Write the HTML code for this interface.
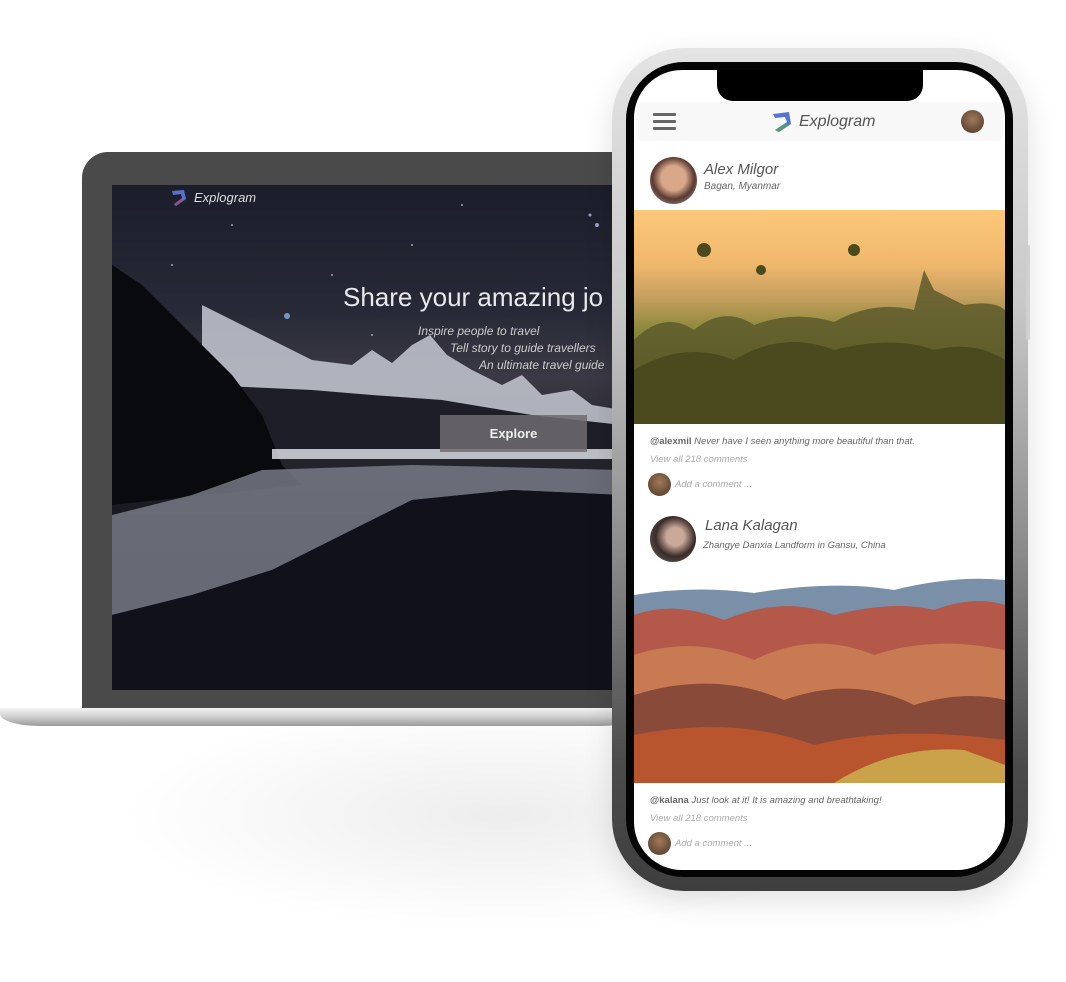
<!DOCTYPE html>
<html><head><meta charset="utf-8"><style>
*{margin:0;padding:0;box-sizing:border-box}
body{width:1066px;height:982px;background:#fff;position:relative;overflow:hidden;font-family:"Liberation Sans",sans-serif}
.abs{position:absolute}
.it{font-style:italic}
</style></head><body>
<!-- laptop shadow -->
<div class="abs" style="left:120px;top:700px;width:760px;height:230px;border-radius:50%;background:radial-gradient(ellipse at center,rgba(0,0,0,0.07),rgba(0,0,0,0) 70%)"></div>
<!-- laptop bezel -->
<div class="abs" style="left:82px;top:152px;width:560px;height:560px;background:#4a4a4a;border-radius:26px 26px 0 0"></div>
<!-- laptop screen -->
<div class="abs" style="left:112px;top:185px;width:510px;height:505px;overflow:hidden;background:linear-gradient(#1b1e2a 0%,#272a36 25%,#3a3944 38%,#23242c 55%,#14151c 70%,#0d0e15 100%)">
<svg width="510" height="505" style="position:absolute;left:0;top:0">
<g fill="#cfd8ff" opacity="0.7">
<circle cx="175" cy="131" r="3" fill="#9cc4ff"/><circle cx="485" cy="40" r="2"/><circle cx="478" cy="30" r="1.5"/><circle cx="300" cy="60" r="1"/><circle cx="220" cy="90" r="1"/><circle cx="120" cy="40" r="1"/><circle cx="390" cy="110" r="1"/><circle cx="60" cy="80" r="1"/><circle cx="350" cy="20" r="1"/><circle cx="260" cy="150" r="1"/>
</g>
<polygon points="90,120 130,140 170,160 200,175 240,180 260,165 280,178 300,160 318,150 335,170 360,185 390,200 410,190 430,210 460,205 480,220 510,225 510,240 90,240" fill="#c5c8d2" opacity="0.85"/>
<polygon points="90,200 200,205 260,210 330,215 420,230 510,240 510,268 90,268" fill="#1d1e28"/>
<polygon points="0,80 30,100 60,130 90,160 120,190 150,230 170,280 190,300 0,320" fill="#090a0e"/>
<rect x="160" y="264" width="350" height="10" fill="#d8dae0" opacity="0.85"/>
<polygon points="150,285 300,280 510,285 510,310 400,305 300,315 240,345 160,385 80,410 0,430 0,330 80,310" fill="#7d808c" opacity="0.8"/>
<polygon points="0,430 80,410 160,385 240,345 300,315 400,305 510,310 510,505 0,505" fill="#10111a"/>
</svg>
<div class="abs it" style="left:82px;top:5px;color:#ddd;font-size:13px">Explogram</div>
<svg class="abs" style="left:58px;top:3px" width="18" height="20"><path d="M2 3 L14 2 L16 11 L6 18 L4 16 L12 10 L11 6 L3 7Z" fill="#5a6fd0"/><path d="M4 16 L12 11 L13 13 L6 18Z" fill="#9a4f7c"/></svg>
<div class="abs" style="left:231px;top:97px;color:#e8e8ee;font-size:26px;white-space:nowrap">Share your amazing jo</div>
<div class="abs it" style="left:306px;top:139px;color:#ccc;font-size:12px;white-space:nowrap">Inspire people to travel</div>
<div class="abs it" style="left:338px;top:156px;color:#ccc;font-size:12px;white-space:nowrap">Tell story to guide travellers</div>
<div class="abs it" style="left:367px;top:173px;color:#ccc;font-size:12px;white-space:nowrap">An ultimate travel guide</div>
<div class="abs" style="left:328px;top:230px;width:147px;height:37px;background:rgba(110,108,112,0.85);color:#eee;font-size:13px;font-weight:bold;text-align:center;line-height:37px">Explore</div>
</div>
<!-- laptop base -->
<div class="abs" style="left:0;top:708px;width:640px;height:18px;background:linear-gradient(#f3f3f3,#cfcfcf 50%,#9a9a9a);border-radius:0 0 40px 40px/0 0 12px 12px"></div>
<!-- phone frame -->
<div class="abs" style="left:612px;top:48px;width:416px;height:843px;border-radius:72px;background:linear-gradient(#e4e4e4 0%,#c9c9c9 30%,#8a8a8a 60%,#4b4b4b 85%,#3e3e3e 100%);box-shadow:0 10px 30px rgba(0,0,0,0.12)"></div>
<div class="abs" style="left:1026px;top:245px;width:4px;height:95px;background:#d0d0d0;border-radius:2px"></div>
<div class="abs" style="left:626px;top:62px;width:387px;height:815px;border-radius:58px;background:#050505"></div>
<div class="abs" style="left:634px;top:70px;width:371px;height:800px;border-radius:48px;background:#fff;overflow:hidden">
  <div class="abs" style="left:83px;top:0;width:206px;height:31px;background:#000;border-radius:0 0 16px 16px"></div>
  <div class="abs" style="left:2px;top:32px;width:367px;height:39px;background:#f8f8f8;border-radius:6px"></div>
  <div class="abs" style="left:19px;top:43px;width:23px;height:3px;background:#666;box-shadow:0 7px 0 #666,0 14px 0 #666;border-radius:1px"></div>
  <svg class="abs" style="left:137px;top:40px" width="22" height="24"><path d="M2 4 L18 2 L20 14 L8 22 L4 20 L16 12 L14 7 L4 8Z" fill="#5576d0"/><path d="M4 20 L16 13 L17 16 L7 22Z" fill="#5aa35a" opacity=".8"/></svg>
  <div class="abs it" style="left:165px;top:43px;font-size:16px;color:#555">Explogram</div>
  <div class="abs" style="left:327px;top:40px;width:23px;height:23px;border-radius:50%;background:radial-gradient(circle at 50% 40%,#a07a5a,#4a3424)"></div>
  <!-- post 1 -->
  <div class="abs" style="left:16px;top:87px;width:47px;height:47px;border-radius:50%;background:radial-gradient(circle at 50% 45%,#d9a88a 0 35%,#5a3a32 60%,#b7a79a)"></div>
  <div class="abs it" style="left:70px;top:91px;font-size:15px;color:#555">Alex Milgor</div>
  <div class="abs it" style="left:70px;top:111px;font-size:10px;color:#666">Bagan, Myanmar</div>
  <div class="abs" style="left:0;top:140px;width:371px;height:214px;background:linear-gradient(#fcc87a 0%,#f0b86c 25%,#c8a060 40%,#8f8a3e 55%,#5f6a24 75%,#4d5a1c 100%)">
    <svg width="371" height="214"><g fill="#5d5a2c" opacity=".85"><path d="M0 130 Q30 100 60 120 Q90 95 120 115 Q160 100 200 112 Q240 90 280 100 L290 60 L300 80 L330 95 Q360 90 371 100 L371 214 L0 214Z"/></g><g fill="#4a4a1e"><circle cx="70" cy="40" r="7"/><circle cx="220" cy="40" r="6"/><circle cx="127" cy="60" r="5"/><path d="M0 160 Q50 130 100 150 Q150 120 200 140 Q260 125 300 140 Q340 130 371 150 L371 214 L0 214Z"/></g></svg>
  </div>
  <div class="abs" style="left:16px;top:366px;font-size:9.5px;color:#666"><b>@alexmil</b> <i>Never have I seen anything more beautiful than that.</i></div>
  <div class="abs it" style="left:16px;top:384px;font-size:9.5px;color:#aaa">View all 218 comments</div>
  <div class="abs" style="left:14px;top:403px;width:23px;height:23px;border-radius:50%;background:radial-gradient(circle at 50% 40%,#a07a5a,#4a3424)"></div>
  <div class="abs it" style="left:41px;top:409px;font-size:9.5px;color:#aaa">Add a comment ...</div>
  <!-- post 2 -->
  <div class="abs" style="left:16px;top:446px;width:46px;height:46px;border-radius:50%;background:radial-gradient(circle at 55% 45%,#caa89a 0 25%,#3a2c28 55%,#6a706a)"></div>
  <div class="abs it" style="left:71px;top:447px;font-size:15px;color:#555">Lana Kalagan</div>
  <div class="abs it" style="left:69px;top:470px;font-size:9.5px;color:#666">Zhangye Danxia Landform in Gansu, China</div>
  <div class="abs" style="left:0;top:505px;width:371px;height:208px;overflow:hidden">
    <svg width="371" height="208"><path d="M0 20 Q60 10 120 18 Q200 5 260 15 Q320 0 371 5 L371 208 L0 208Z" fill="#7a8fa8"/><path d="M0 40 Q40 25 90 45 Q150 20 200 40 Q260 25 300 35 Q340 20 371 30 L371 208 L0 208Z" fill="#b4584a"/><path d="M0 80 Q60 60 120 85 Q180 55 240 80 Q300 60 371 75 L371 208 L0 208Z" fill="#c87a52"/><path d="M0 120 Q80 95 150 125 Q220 100 280 130 Q330 115 371 125 L371 208 L0 208Z" fill="#8a4a3a"/><path d="M0 160 Q100 140 180 170 Q260 150 371 165 L371 208 L0 208Z" fill="#b8542e"/><path d="M200 208 Q260 170 330 175 L371 190 L371 208Z" fill="#c9a24a"/></svg>
  </div>
  <div class="abs" style="left:16px;top:725px;font-size:9.5px;color:#666"><b>@kalana</b> <i>Just look at it! It is amazing and breathtaking!</i></div>
  <div class="abs it" style="left:16px;top:743px;font-size:9.5px;color:#aaa">View all 218 comments</div>
  <div class="abs" style="left:14px;top:762px;width:23px;height:23px;border-radius:50%;background:radial-gradient(circle at 50% 40%,#a07a5a,#4a3424)"></div>
  <div class="abs it" style="left:41px;top:768px;font-size:9.5px;color:#aaa">Add a comment ...</div>
</div>
</body></html>
